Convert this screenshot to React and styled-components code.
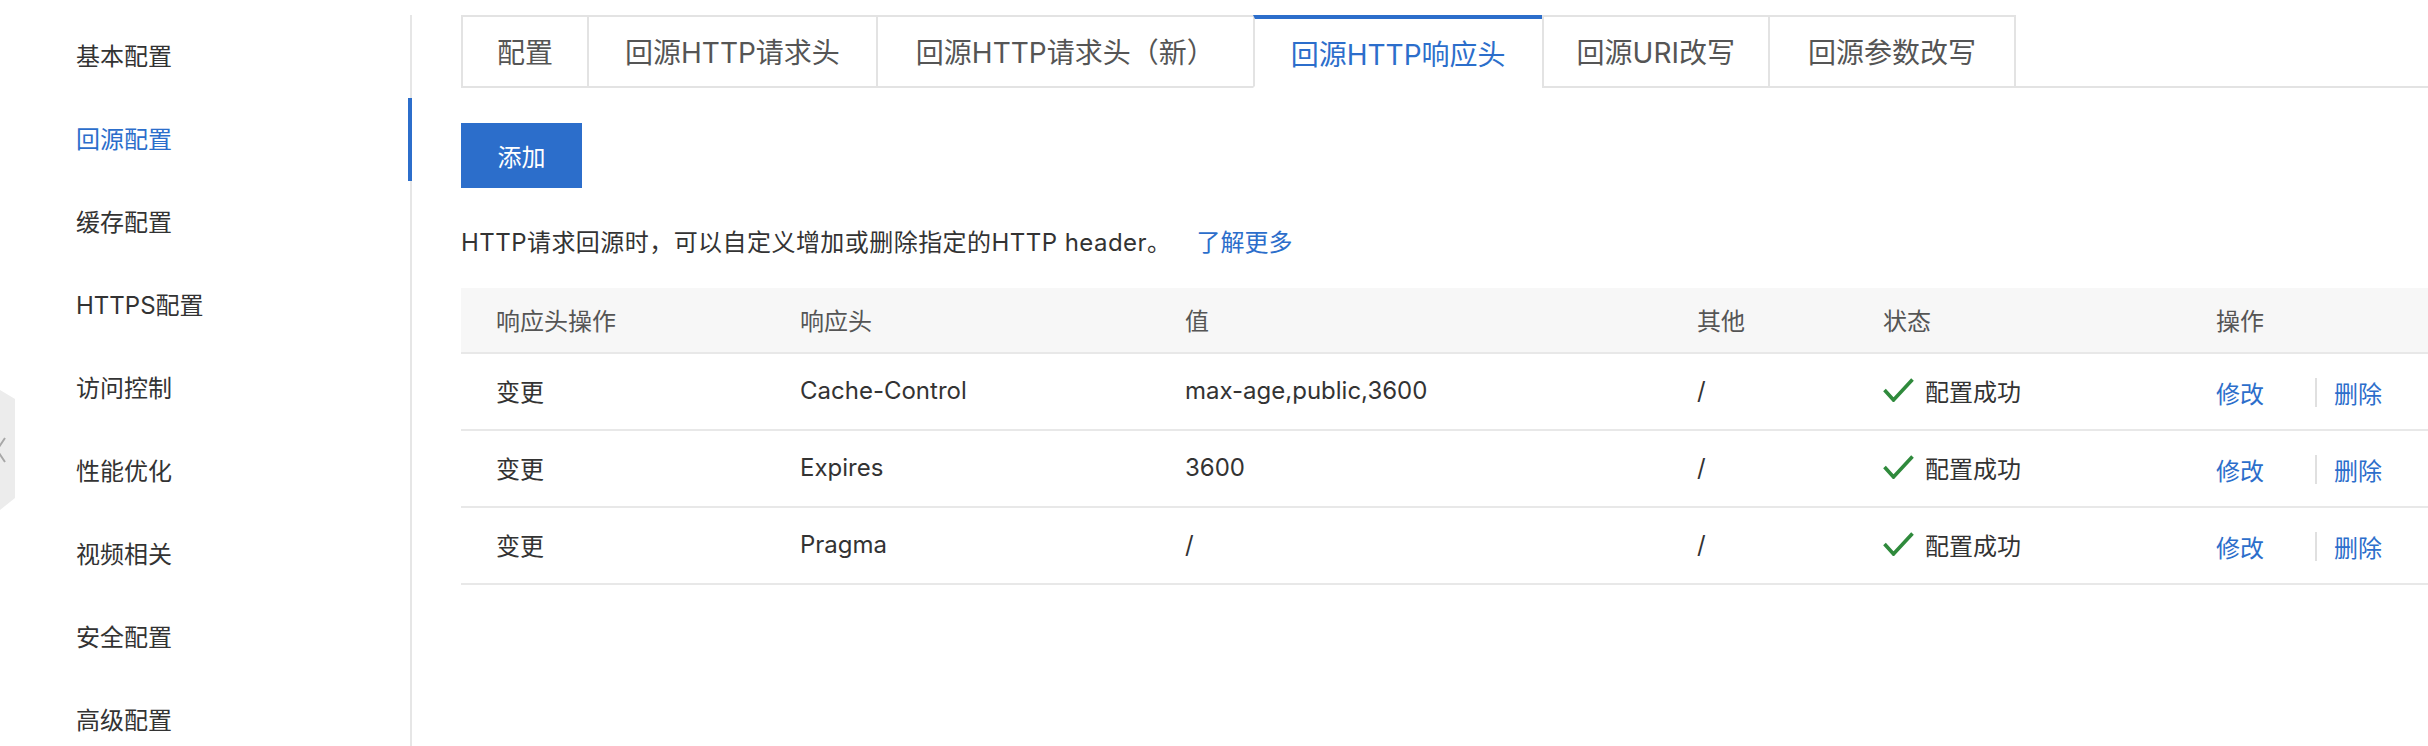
import React from "react";
import styled, { createGlobalStyle } from "styled-components";

const Global = createGlobalStyle`
  html, body {
    margin: 0;
    padding: 0;
    background: #ffffff;
    overflow: hidden;
  }
  body {
    font-family: Inter, "Noto Sans CJK SC", sans-serif;
    color: #333333;
  }
  * { box-sizing: border-box; }
`;

const BLUE = "#2c6ecb";
const LINE = "#e3e3e3";

const Page = styled.div`
  position: relative;
  display: flex;
  height: 746px;
  padding-top: 14px;
  overflow: hidden;
`;

const Sidebar = styled.nav`
  flex: 0 0 412px;
  border-right: 2px solid #e6e6e6;
  margin-top: 1px;
  display: flex;
  flex-direction: column;
`;

const NavItem = styled.div`
  position: relative;
  height: 83px;
  flex: 0 0 83px;
  display: flex;
  align-items: center;
  padding-left: 76px;
  padding-bottom: 5px;
  font-size: 24px;
  color: ${(p) => (p.$active ? BLUE : "#333333")};
  &::after {
    content: "";
    display: ${(p) => (p.$active ? "block" : "none")};
    position: absolute;
    right: -2px;
    top: 0;
    bottom: 0;
    width: 4px;
    background: ${BLUE};
  }
`;

const CollapseTab = styled.div`
  position: absolute;
  left: 0;
  top: 390px;
  width: 15px;
  height: 120px;
  background: #ececec;
  clip-path: polygon(0 0, 100% 9px, 100% calc(100% - 12px), 0 100%);
  svg { display: block; }
`;

const Main = styled.main`
  flex: 1;
  min-width: 0;
  padding-left: 49px;
  padding-top: 1px;
  display: flex;
  flex-direction: column;
`;

const TabBar = styled.div`
  display: flex;
  height: 73px;
  border-bottom: 2px solid ${LINE};
  margin-bottom: 35px;
`;

const Tab = styled.div`
  height: 73px;
  padding: 0 ${(p) => p.$pad}px;
  display: flex;
  align-items: center;
  font-size: 28px;
  white-space: nowrap;
  color: ${(p) => (p.$active ? BLUE : "#555555")};
  background: #ffffff;
  border: 2px solid ${LINE};
  border-right: ${(p) => (p.$last ? `2px solid ${LINE}` : "none")};
  border-top: ${(p) => (p.$active ? `4px solid ${BLUE}` : `2px solid ${LINE}`)};
  border-bottom-color: ${(p) => (p.$active ? "#ffffff" : LINE)};
  padding-bottom: ${(p) => (p.$active ? "0" : "2px")};
`;

const AddButton = styled.button`
  align-self: flex-start;
  width: 121px;
  height: 65px;
  border: none;
  background: ${BLUE};
  color: #ffffff;
  font-family: inherit;
  font-size: 24px;
  padding: 0;
  cursor: pointer;
  margin-bottom: 37px;
`;

const Desc = styled.p`
  margin: 0 0 27px;
  font-size: 24px;
  line-height: 36px;
  letter-spacing: 0.45px;
  color: #333333;
  white-space: nowrap;
`;

const MoreLink = styled.a`
  color: ${BLUE};
  text-decoration: none;
  letter-spacing: 0;
  margin-left: 25px;
`;

const Table = styled.div`
  display: flex;
  flex-direction: column;
  font-size: 24px;
`;

const Row = styled.div`
  display: grid;
  grid-template-columns: 304px 385px 512px 186px 333px 1fr;
  align-items: center;
  height: ${(p) => (p.$head ? "66px" : "77px")};
  padding-bottom: ${(p) => (p.$head ? "1px" : "3px")};
  background: ${(p) => (p.$head ? "#f7f7f7" : "#ffffff")};
  border-bottom: 2px solid #e8e8e8;
  color: ${(p) => (p.$head ? "#555555" : "#333333")};
`;

const Cell = styled.div`
  padding-left: 35px;
  white-space: nowrap;
  display: flex;
  align-items: center;
`;

const Status = styled.span`
  display: inline-flex;
  align-items: center;
  gap: 11px;
  color: #333333;
`;

const Actions = styled.div`
  display: flex;
  align-items: center;
  padding-top: 4px;
`;

const ActionLink = styled.a`
  color: ${BLUE};
  text-decoration: none;
  cursor: pointer;
`;

const Sep = styled.span`
  width: 2px;
  height: 29px;
  background: #e0e0e0;
  margin: 0 17px 0 51px;
`;

const CheckIcon = () => (
  <svg width="31" height="24" viewBox="0 0 31 24" aria-hidden="true">
    <polyline
      points="1.5,12 10.5,22 29.5,1.5"
      fill="none"
      stroke="#2f8a3c"
      strokeWidth="3.6"
      strokeLinecap="butt"
      strokeLinejoin="miter"
    />
  </svg>
);

const navItems = [
  "基本配置",
  "回源配置",
  "缓存配置",
  "HTTPS配置",
  "访问控制",
  "性能优化",
  "视频相关",
  "安全配置",
  "高级配置",
];

const tabs = [
  { label: "配置", pad: 34 },
  { label: "回源HTTP请求头", pad: 36 },
  { label: "回源HTTP请求头（新）", pad: 38 },
  { label: "回源HTTP响应头", pad: 36 },
  { label: "回源URI改写", pad: 33 },
  { label: "回源参数改写", pad: 38 },
];

const rows = [
  { op: "变更", name: "Cache-Control", value: "max-age,public,3600", other: "/" },
  { op: "变更", name: "Expires", value: "3600", other: "/" },
  { op: "变更", name: "Pragma", value: "/", other: "/" },
];

export default function App() {
  return (
    <>
      <Global />
      <Page>
        <Sidebar>
          {navItems.map((n, i) => (
            <NavItem key={n} $active={i === 1}>
              {n}
            </NavItem>
          ))}
        </Sidebar>
        <CollapseTab>
          <svg width="15" height="120" viewBox="0 0 15 120" aria-hidden="true">
            <polyline
              points="5,48 -3,60 5,72"
              fill="none"
              stroke="#a8a8a8"
              strokeWidth="2"
            />
          </svg>
        </CollapseTab>
        <Main>
          <TabBar>
            {tabs.map((t, i) => (
              <Tab
                key={t.label}
                $pad={t.pad}
                $active={i === 3}
                $last={i === tabs.length - 1}
              >
                {t.label}
              </Tab>
            ))}
          </TabBar>
          <AddButton>添加</AddButton>
          <Desc>
            HTTP请求回源时，可以自定义增加或删除指定的HTTP header。
            <MoreLink href="#">了解更多</MoreLink>
          </Desc>
          <Table>
            <Row $head>
              <Cell>响应头操作</Cell>
              <Cell>响应头</Cell>
              <Cell>值</Cell>
              <Cell>其他</Cell>
              <Cell>状态</Cell>
              <Cell>操作</Cell>
            </Row>
            {rows.map((r) => (
              <Row key={r.name}>
                <Cell>{r.op}</Cell>
                <Cell>{r.name}</Cell>
                <Cell>{r.value}</Cell>
                <Cell>{r.other}</Cell>
                <Cell>
                  <Status>
                    <CheckIcon />
                    配置成功
                  </Status>
                </Cell>
                <Cell>
                  <Actions>
                    <ActionLink>修改</ActionLink>
                    <Sep />
                    <ActionLink>删除</ActionLink>
                  </Actions>
                </Cell>
              </Row>
            ))}
          </Table>
        </Main>
      </Page>
    </>
  );
}
